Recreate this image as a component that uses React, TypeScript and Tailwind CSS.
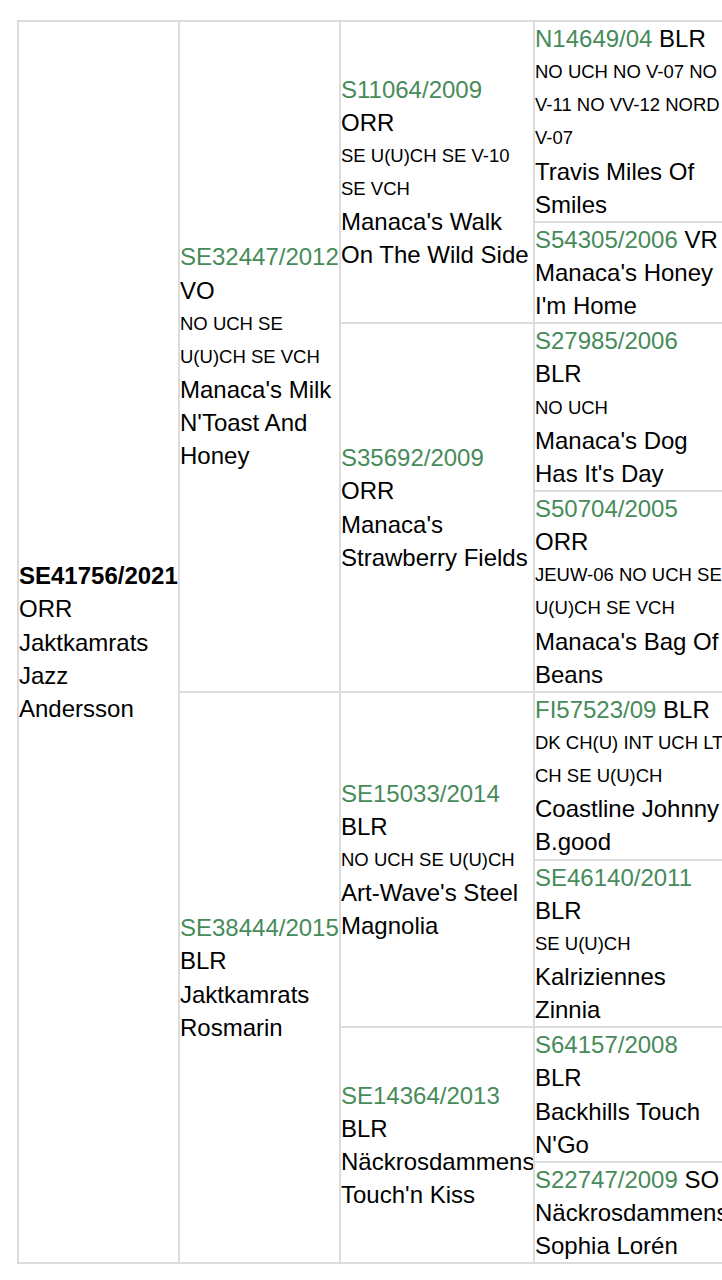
import React from 'react';

type Dog = {
  reg: string;
  breed: string;
  inline?: boolean;
  bold?: boolean;
  titles?: string[];
  name: string[];
};

const proband: Dog = {
  reg: 'SE41756/2021',
  breed: 'ORR',
  bold: true,
  name: ['Jaktkamrats', 'Jazz', 'Andersson'],
};

const parents: Dog[] = [
  {
    reg: 'SE32447/2012',
    breed: 'VO',
    titles: ['NO UCH SE', 'U(U)CH SE VCH'],
    name: ["Manaca's Milk", "N'Toast And", 'Honey'],
  },
  { reg: 'SE38444/2015', breed: 'BLR', name: ['Jaktkamrats', 'Rosmarin'] },
];

const grandparents: Dog[] = [
  {
    reg: 'S11064/2009',
    breed: 'ORR',
    titles: ['SE U(U)CH SE V-10', 'SE VCH'],
    name: ["Manaca's Walk", 'On The Wild Side'],
  },
  { reg: 'S35692/2009', breed: 'ORR', name: ["Manaca's", 'Strawberry Fields'] },
  {
    reg: 'SE15033/2014',
    breed: 'BLR',
    titles: ['NO UCH SE U(U)CH'],
    name: ["Art-Wave's Steel", 'Magnolia'],
  },
  { reg: 'SE14364/2013', breed: 'BLR', name: ['Näckrosdammens', "Touch'n Kiss"] },
];

const greatGrandparents: Dog[] = [
  {
    reg: 'N14649/04',
    breed: 'BLR',
    inline: true,
    titles: ['NO UCH NO V-07 NO', 'V-11 NO VV-12 NORD', 'V-07'],
    name: ['Travis Miles Of', 'Smiles'],
  },
  { reg: 'S54305/2006', breed: 'VR', inline: true, name: ["Manaca's Honey", "I'm Home"] },
  {
    reg: 'S27985/2006',
    breed: 'BLR',
    titles: ['NO UCH'],
    name: ["Manaca's Dog", "Has It's Day"],
  },
  {
    reg: 'S50704/2005',
    breed: 'ORR',
    titles: ['JEUW-06 NO UCH SE', 'U(U)CH SE VCH'],
    name: ["Manaca's Bag Of", 'Beans'],
  },
  {
    reg: 'FI57523/09',
    breed: 'BLR',
    inline: true,
    titles: ['DK CH(U) INT UCH LT', 'CH SE U(U)CH'],
    name: ['Coastline Johnny', 'B.good'],
  },
  {
    reg: 'SE46140/2011',
    breed: 'BLR',
    titles: ['SE U(U)CH'],
    name: ['Kalriziennes', 'Zinnia'],
  },
  { reg: 'S64157/2008', breed: 'BLR', name: ['Backhills Touch', "N'Go"] },
  { reg: 'S22747/2009', breed: 'SO', inline: true, name: ['Näckrosdammens', 'Sophia Lorén'] },
];

function DogCell({ dog, rowSpan }: { dog: Dog; rowSpan?: number }) {
  return (
    <td
      rowSpan={rowSpan}
      className="border-2 border-[#dcdcdc] p-0 align-middle whitespace-nowrap overflow-hidden"
    >
      {dog.inline ? (
        <div>
          <span className="text-[#478b5a]">{dog.reg}</span> {dog.breed}
        </div>
      ) : (
        <>
          <div className={dog.bold ? 'font-bold text-black' : 'text-[#478b5a]'}>{dog.reg}</div>
          <div>{dog.breed}</div>
        </>
      )}
      {/* titles are set smaller but keep the same line pitch */}
      {dog.titles?.map((t) => (
        <div key={t} className="text-[18.5px]">
          {t}
        </div>
      ))}
      {dog.name.map((n) => (
        <div key={n}>{n}</div>
      ))}
    </td>
  );
}

export default function App() {
  const rows = greatGrandparents.map((ggp, i) => (
    <tr key={ggp.reg}>
      {i === 0 && <DogCell dog={proband} rowSpan={8} />}
      {i % 4 === 0 && <DogCell dog={parents[i / 4]} rowSpan={4} />}
      {i % 2 === 0 && <DogCell dog={grandparents[i / 2]} rowSpan={2} />}
      <DogCell dog={ggp} />
    </tr>
  ));

  return (
    <div className="w-[722px] min-h-[1280px] overflow-hidden bg-white">
      <div
        className="pl-[17px] pt-[20px] text-[24px] leading-[33.14px] text-black"
        style={{ fontFamily: '"Liberation Sans", Arial, sans-serif' }}
      >
        <table className="border-collapse table-fixed w-[718px]">
          <colgroup>
            <col className="w-[161px]" />
            <col className="w-[161px]" />
            <col className="w-[194px]" />
            <col className="w-[202px]" />
          </colgroup>
          <tbody>{rows}</tbody>
        </table>
      </div>
    </div>
  );
}
